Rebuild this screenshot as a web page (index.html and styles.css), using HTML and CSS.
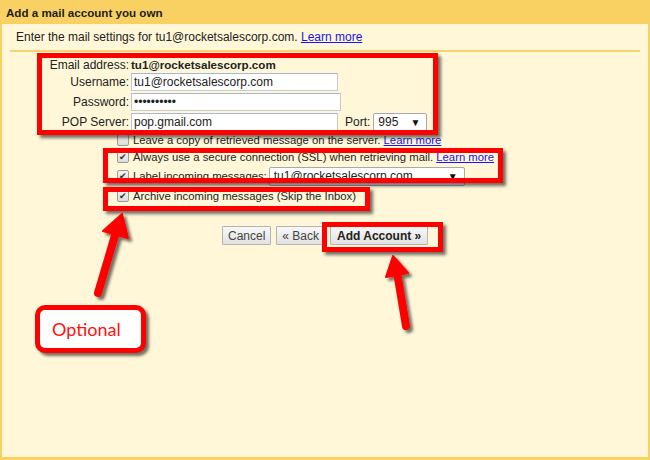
FILE: index.html
```html
<!DOCTYPE html>
<html lang="en">
<head>
<meta charset="utf-8">
<title>Add a mail account you own</title>
<link rel="stylesheet" href="styles.css">
</head>
<body>
<div class="dialog">
  <div class="titlebar">Add a mail account you own</div>
  <div class="panel">
    <p class="intro">Enter the mail settings for tu1@rocketsalescorp.com. <a href="#" class="link">Learn more</a></p>
    <div class="rule"></div>

    <div class="fields">
      <span class="label first">Email address:</span>
      <span class="value">tu1@rocketsalescorp.com</span>

      <span class="label">Username:</span>
      <span class="field"><input class="text w-user" type="text" value="tu1@rocketsalescorp.com"></span>

      <span class="label">Password:</span>
      <span class="field"><input class="text w-pass" type="password" value="abcdefghij"></span>

      <span class="label">POP Server:</span>
      <span class="field">
        <input class="text w-user" type="text" value="pop.gmail.com">
        <span class="port-label">Port:</span>
        <span class="select port"><span>995</span><span class="caret">▼</span></span>
      </span>
    </div>

    <div class="options">
      <label class="opt o-leave"><span class="box"></span><span>Leave a copy of retrieved message on the server. <a href="#" class="link">Learn more</a></span></label>
      <label class="opt o-ssl"><span class="box checked">✔</span><span>Always use a secure connection (SSL) when retrieving mail. <a href="#" class="link">Learn more</a></span></label>
      <label class="opt o-label"><span class="box checked">✔</span><span>Label incoming messages:</span><span class="select labelsel"><span>tu1@rocketsalescorp.com</span><span class="caret">▼</span></span></label>
      <label class="opt o-archive"><span class="box checked">✔</span><span>Archive incoming messages (Skip the Inbox)</span></label>
    </div>

    <div class="buttons">
      <button class="btn">Cancel</button>
      <button class="btn">« Back</button>
      <button class="btn primary">Add Account »</button>
    </div>
  </div>

  <!-- callout marks drawn over the form -->
  <div class="mark m-fields"></div>
  <div class="mark m-secure"></div>
  <div class="mark m-archive"></div>
  <div class="mark m-add"></div>
  <div class="callout">Optional</div>
  <svg class="arrows" width="650" height="460" viewBox="0 0 650 460">
    <defs>
      <filter id="shade" x="-30%" y="-30%" width="160%" height="160%">
        <feDropShadow dx="3" dy="3" stdDeviation="1.6" flood-color="#000" flood-opacity="0.55"/>
      </filter>
    </defs>
    <g filter="url(#shade)" fill="#ff0000" stroke="#ff0000">
      <line x1="98" y1="293" x2="116" y2="232" stroke-width="8" stroke-linecap="round"/>
      <polygon points="122,214 128,238 103,231" stroke-width="2" stroke-linejoin="round"/>
      <line x1="406" y1="326" x2="397" y2="272" stroke-width="8" stroke-linecap="round"/>
      <polygon points="393,256 408,273 386,277" stroke-width="2" stroke-linejoin="round"/>
    </g>
  </svg>
</div>
</body>
</html>
```

FILE: styles.css
```css
* { box-sizing: border-box; }

html, body {
  margin: 0;
  padding: 0;
  background: #fff7d8;
}

body {
  font-family: "Liberation Sans", Arial, sans-serif;
  font-size: 12px;
  color: #222;
}

.dialog {
  position: relative;
  width: 650px;
  height: 460px;
  background: #f9d163;
  padding: 0 2px 3px 2px;
  display: flex;
  flex-direction: column;
}

.titlebar {
  height: 24px;
  padding: 6px 0 0 4px;
  font-size: 11.6px;
  line-height: 14px;
  font-weight: bold;
  color: #1e1e1e;
}

.panel {
  flex: 1;
  background: #fff7d8;
  display: flex;
  flex-direction: column;
}

.intro {
  margin: 6px 0 0 14px;
  height: 14px;
  line-height: 14px;
  color: #222;
}

.link {
  color: #1515ee;
  text-decoration: underline;
}

.rule {
  margin: 6px 8px 0 8px;
  height: 2px;
  background: #f7d36d;
}

/* account fields: right-aligned labels beside inputs */
.fields {
  display: grid;
  grid-template-columns: 127px auto;
  column-gap: 2px;
  row-gap: 2px;
  margin-top: 7px;
  align-items: center;
}

.label {
  text-align: right;
  color: #222;
  white-space: nowrap;
}

.label.first,
.value {
  height: 12px;
  line-height: 12px;
}

.value {
  font-weight: bold;
  font-size: 11.6px;
  color: #222;
}

.field {
  display: flex;
  align-items: center;
  height: 18px;
}

.text {
  height: 18px;
  padding: 0 2px;
  border: 1px solid #c9c9c9;
  border-top-color: #a6b7cf;
  border-left-color: #b9c6d8;
  background: #fff;
  font-family: "Liberation Sans", Arial, sans-serif;
  font-size: 12px;
  color: #222;
  margin: 0;
  outline: none;
}

.w-user { width: 207px; }
.w-pass { width: 210px; }

.port-label {
  margin: 0 3px 0 7px;
}

.select {
  display: inline-flex;
  align-items: center;
  justify-content: space-between;
  height: 18px;
  padding: 0 6px 0 4px;
  border: 1px solid #a9a9a9;
  border-radius: 2px;
  background: #fff;
  color: #222;
}

.caret { font-size: 10px; color: #111; }

.port { width: 54px; }

/* checkbox options */
.options {
  display: flex;
  flex-direction: column;
  padding-left: 115px;
  margin-top: 1px;
  font-size: 11.3px;
}

.opt {
  display: flex;
  align-items: center;
  height: 19px;
  white-space: nowrap;
  color: #222;
}

.o-leave { height: 15px; }
.o-label { height: 20px; }

.box {
  flex: none;
  width: 12px;
  height: 12px;
  margin-right: 4px;
  border: 1px solid #9a9a9a;
  border-radius: 2px;
  background: linear-gradient(#f3f3f3, #dcdcdc);
  font-size: 9px;
  line-height: 10px;
  text-align: center;
  color: #333;
}

.labelsel {
  width: 196px;
  margin-left: 2px;
  height: 19px;
  font-size: 12px;
}

.buttons {
  display: flex;
  gap: 5px;
  padding-left: 220px;
  margin-top: 21px;
}

.btn {
  height: 19px;
  padding: 0 5px;
  border: 1px solid #b3b3b3;
  border-radius: 1px;
  background: linear-gradient(#f8f8f8, #e2e2e2);
  font-family: "Liberation Sans", Arial, sans-serif;
  font-size: 12px;
  color: #444;
}

.btn.primary {
  font-weight: bold;
  color: #222;
  padding: 0 6px;
}

/* red annotation frames */
.mark {
  position: absolute;
  border: 5px solid #ff0000;
  box-shadow: 3px 3px 3px rgba(0, 0, 0, 0.55);
}

.m-fields  { left: 37px;  top: 53px;  width: 401px; height: 82px; }
.m-secure  { left: 103px; top: 148px; width: 400px; height: 35px; }
.m-archive { left: 103px; top: 187px; width: 267px; height: 24px; }
.m-add     { left: 322px; top: 222px; width: 121px; height: 30px; }

.callout {
  position: absolute;
  left: 35px;
  top: 305px;
  width: 111px;
  height: 48px;
  border: 5px solid #ff0000;
  border-radius: 10px;
  background: #fff;
  box-shadow: 3px 3px 3px rgba(0, 0, 0, 0.55);
  font-family: Lato, "Open Sans", sans-serif;
  font-size: 18px;
  color: #ff1010;
  padding: 8px 0 0 12px;
}

.arrows {
  position: absolute;
  left: 0;
  top: 0;
  pointer-events: none;
}
```
